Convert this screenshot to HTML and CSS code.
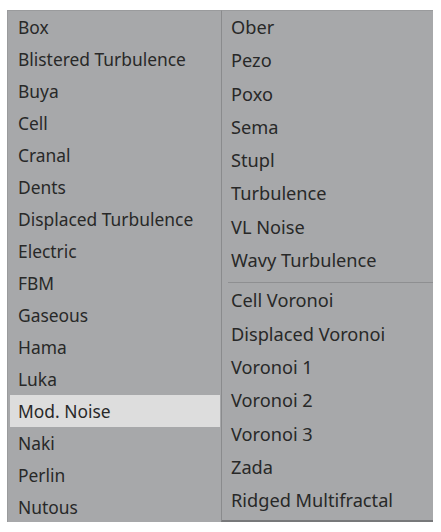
FILE: index.html
```html
<!DOCTYPE html>
<html>
<head>
<meta charset="utf-8">
<link rel="stylesheet" href="styles.css">
</head>
<body>
<div class="wrap">
  <ul class="menu menu-left">
    <li class="item">Box</li>
    <li class="item">Blistered Turbulence</li>
    <li class="item">Buya</li>
    <li class="item">Cell</li>
    <li class="item">Cranal</li>
    <li class="item">Dents</li>
    <li class="item">Displaced Turbulence</li>
    <li class="item">Electric</li>
    <li class="item">FBM</li>
    <li class="item">Gaseous</li>
    <li class="item">Hama</li>
    <li class="item">Luka</li>
    <li class="item active">Mod. Noise</li>
    <li class="item">Naki</li>
    <li class="item">Perlin</li>
    <li class="item">Nutous</li>
  </ul>
  <ul class="menu menu-right">
    <li class="item r">Ober</li>
    <li class="item r">Pezo</li>
    <li class="item r">Poxo</li>
    <li class="item r">Sema</li>
    <li class="item r">Stupl</li>
    <li class="item r">Turbulence</li>
    <li class="item r">VL Noise</li>
    <li class="item r">Wavy Turbulence</li>
    <li class="sep"></li>
    <li class="item r">Cell Voronoi</li>
    <li class="item r">Displaced Voronoi</li>
    <li class="item r">Voronoi 1</li>
    <li class="item r">Voronoi 2</li>
    <li class="item r">Voronoi 3</li>
    <li class="item r">Zada</li>
    <li class="item r">Ridged Multifractal</li>
  </ul>
</div>
</body>
</html>
```

FILE: styles.css
```css
html, body {
  margin: 0;
  padding: 0;
  background: #ffffff;
}
.wrap {
  display: flex;
  align-items: flex-start;
  padding: 10px 0 0 7px;
  font-family: "Noto Sans", "Open Sans", sans-serif;
  font-size: 17.4px;
  color: #282828;
}
.menu {
  list-style: none;
  margin: 0;
  padding: 0;
  background: #a7a8aa;
  box-sizing: border-box;
}
.menu-left {
  width: 214px;
  height: 512px;
  border-top: 1px solid #9a9b9d;
  border-left: 1px solid #9a9b9d;
  padding: 0 1px 0 2px;
}
.menu-right {
  width: 212px;
  height: 512px;
  border-top: 1px solid #9a9b9d;
  border-left: 1px solid #8a8b8d;
  border-bottom: 2px solid #77787a;
  padding: 0 0 4px 0;
  font-size: 18.2px;
}
.item {
  height: 32px;
  line-height: 32px;
  padding-left: 8px;
  white-space: nowrap;
}
.item.r {
  height: 33.3px;
  line-height: 33px;
  padding-left: 9px;
}
.item.active {
  background: #dddddd;
}
.sep {
  margin: 0 0 1px 6px;
  border-bottom: 1px solid #8e8f91;
  box-sizing: border-box;
  height: 6px;
}
```
